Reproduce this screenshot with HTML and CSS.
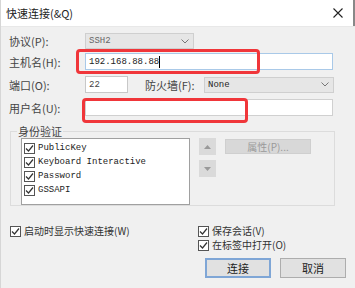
FILE: index.html
```html
<!DOCTYPE html>
<html>
<head>
<meta charset="utf-8">
<link rel="stylesheet" href="styles.css">
</head>
<body>
<div class="win">
  <div class="titlebar">
    <span class="title">快速连接(&amp;Q)</span>
    <svg class="close" width="10" height="10" viewBox="0 0 10 10"><path d="M0.5 0.5L9.5 9.5M9.5 0.5L0.5 9.5" stroke="#222" stroke-width="1.1"/></svg>
    <div class="edge"></div>
  </div>
  <div class="body">
    <div class="row r1">
      <span class="lbl">协议(P):</span>
      <div class="select sel-proto"><span class="mono">SSH2</span><svg class="chev" width="8" height="5" viewBox="0 0 8 5"><path d="M0.5 0.5L4 4L7.5 0.5" fill="none" stroke="#777" stroke-width="1"/></svg></div>
    </div>
    <div class="row r2">
      <span class="lbl">主机名(H):</span>
      <div class="input wide"><span class="mono">192.168.88.88</span><span class="caret"></span></div>
      <div class="mark mark-host"></div>
    </div>
    <div class="row r3">
      <span class="lbl">端口(O):</span>
      <div class="input port"><span class="mono">22</span></div>
      <span class="lbl fw">防火墙(F):</span>
      <div class="select sel-fw"><span class="mono">None</span><svg class="chev" width="8" height="5" viewBox="0 0 8 5"><path d="M0.5 0.5L4 4L7.5 0.5" fill="none" stroke="#777" stroke-width="1"/></svg></div>
    </div>
    <div class="row r4">
      <span class="lbl">用户名(U):</span>
      <div class="input wide"></div>
      <div class="mark mark-user"></div>
    </div>
    <fieldset class="group">
      <legend>身份验证</legend>
      <div class="grp-inner">
        <div class="listbox">
          <div class="item"><span class="cb"><svg width="9" height="9" viewBox="0 0 9 9"><path d="M1 4.5L3.5 7L8 1.5" fill="none" stroke="#333" stroke-width="1.2"/></svg></span><span class="mono">PublicKey</span></div>
          <div class="item"><span class="cb"><svg width="9" height="9" viewBox="0 0 9 9"><path d="M1 4.5L3.5 7L8 1.5" fill="none" stroke="#333" stroke-width="1.2"/></svg></span><span class="mono">Keyboard Interactive</span></div>
          <div class="item"><span class="cb"><svg width="9" height="9" viewBox="0 0 9 9"><path d="M1 4.5L3.5 7L8 1.5" fill="none" stroke="#333" stroke-width="1.2"/></svg></span><span class="mono">Password</span></div>
          <div class="item"><span class="cb"><svg width="9" height="9" viewBox="0 0 9 9"><path d="M1 4.5L3.5 7L8 1.5" fill="none" stroke="#333" stroke-width="1.2"/></svg></span><span class="mono">GSSAPI</span></div>
        </div>
        <div class="arrows">
          <div class="abtn"><svg width="7" height="4" viewBox="0 0 7 4"><path d="M0 4L3.5 0L7 4Z" fill="#999"/></svg></div>
          <div class="abtn"><svg width="7" height="4" viewBox="0 0 7 4"><path d="M0 0L3.5 4L7 0Z" fill="#999"/></svg></div>
        </div>
        <div class="propbtn">属性(P)...</div>
      </div>
    </fieldset>
    <div class="bottom">
      <div class="col-left">
        <div class="chk"><span class="cb"><svg width="9" height="9" viewBox="0 0 9 9"><path d="M1 4.5L3.5 7L8 1.5" fill="none" stroke="#333" stroke-width="1.2"/></svg></span><span>启动时显示快速连接(W)</span></div>
      </div>
      <div class="col-right">
        <div class="chk"><span class="cb"><svg width="9" height="9" viewBox="0 0 9 9"><path d="M1 4.5L3.5 7L8 1.5" fill="none" stroke="#333" stroke-width="1.2"/></svg></span><span>保存会话(V)</span></div>
        <div class="chk"><span class="cb"><svg width="9" height="9" viewBox="0 0 9 9"><path d="M1 4.5L3.5 7L8 1.5" fill="none" stroke="#333" stroke-width="1.2"/></svg></span><span>在标签中打开(O)</span></div>
        <div class="buttons">
          <div class="btn default">连接</div>
          <div class="btn">取消</div>
        </div>
      </div>
    </div>
  </div>
</div>
</body>
</html>
```

FILE: styles.css
```css
* { box-sizing: border-box; }
html, body { margin: 0; padding: 0; }
body {
  width: 355px;
  height: 288px;
  overflow: hidden;
  background: #f0f0f0;
  font-family: "Noto Sans CJK SC", sans-serif;
  font-size: 11px;
  color: #333;
}
.win {
  width: 355px;
  height: 288px;
  background: #f0f0f0;
  border-left: 1px solid #d6d6d6;
}
.titlebar {
  position: relative;
  height: 27px;
  background: #fff;
  display: flex;
  align-items: center;
  padding-left: 5px;
  border-bottom: 1px solid #e8e8e8;
}
.title { font-size: 11px; color: #222; flex: 1; }
.close { margin-right: 12px; }
.edge {
  position: absolute;
  right: 0;
  top: 0;
  width: 2px;
  height: 26px;
  background: #888;
}
.body { padding: 6px 0 0 8px; }
.row {
  position: relative;
  display: flex;
  align-items: center;
  height: 17px;
}
.r1 { height: 16px; }
.r2 { margin-top: 4px; }
.r3 { margin-top: 6px; }
.r4 { margin-top: 6px; }
.lbl { width: 76px; color: #444; white-space: nowrap; }
.fw { width: 59px; margin-left: 17px; }
.mono {
  font-family: "Liberation Mono", monospace;
  font-size: 9px;
  color: #222;
}
.select {
  display: flex;
  align-items: center;
  justify-content: space-between;
  height: 16px;
  background: #e6e6e6;
  border: 1px solid #cfcfcf;
  padding: 0 4px 0 3px;
}
.sel-proto { width: 109px; }
.sel-proto .mono { color: #666; }
.sel-fw { width: 130px; }
.input {
  display: flex;
  align-items: center;
  height: 17px;
  background: #fff;
  border: 1px solid #a9c9e8;
  padding-left: 3px;
}
.wide { width: 248px; }
.r4 .wide { border-color: #d0d0d0; }
.port { width: 43px; border-color: #c8c8c8; }
.port .mono { color: #444; }
.caret { width: 1px; height: 12px; background: #000; margin-left: 0; }
.mark {
  position: absolute;
  border: 3px solid #f0363a;
  border-radius: 4px;
}
.mark-host { left: 67px; top: -4px; width: 184px; height: 25px; }
.mark-user { left: 73px; top: -1px; width: 166px; height: 25px; }
.group {
  margin: 9px 0 0 1px;
  width: 325px;
  height: 81px;
  border: 1px solid #dcdcdc;
  padding: 0 0 0 10px;
}
.group legend {
  padding: 0 1px;
  margin-left: -4px;
  color: #444;
  line-height: 12px;
}
.grp-inner { display: flex; align-items: flex-start; margin-top: 1px; }
.listbox {
  width: 169px;
  height: 67px;
  background: #fff;
  border: 1px solid #a0a0a0;
  padding: 2px 0 0 2px;
}
.item { display: flex; align-items: center; height: 14px; }
.cb {
  display: inline-flex;
  align-items: center;
  justify-content: center;
  flex: none;
  width: 11px;
  height: 11px;
  background: #fff;
  border: 1px solid #555;
  margin-right: 3px;
}
.arrows { margin-left: 9px; display: flex; flex-direction: column; gap: 5px; }
.abtn {
  width: 17px;
  height: 17px;
  background: #dadada;
  display: flex;
  align-items: center;
  justify-content: center;
}
.propbtn {
  margin-left: 9px;
  margin-top: 1px;
  width: 86px;
  height: 15px;
  background: #d8d8d8;
  border: 1px solid #cfcfcf;
  color: #9a9a9a;
  font-size: 10px;
  display: flex;
  align-items: center;
  justify-content: center;
  line-height: 1;
}
.bottom { display: flex; margin-top: 18px; }
.col-left { width: 189px; padding-left: 1px; }
.col-right { display: flex; flex-direction: column; }
.chk {
  display: flex;
  align-items: center;
  height: 14px;
  line-height: 14px;
  color: #333;
  font-size: 10px;
  white-space: nowrap;
}
.buttons { display: flex; gap: 9px; margin-top: 6px; margin-left: 7px; }
.btn {
  width: 66px;
  height: 20px;
  background: #e1e1e1;
  border: 1px solid #adadad;
  display: flex;
  align-items: center;
  justify-content: center;
  color: #222;
}
.btn.default { border: 2px solid #7fa6d6; }
```
